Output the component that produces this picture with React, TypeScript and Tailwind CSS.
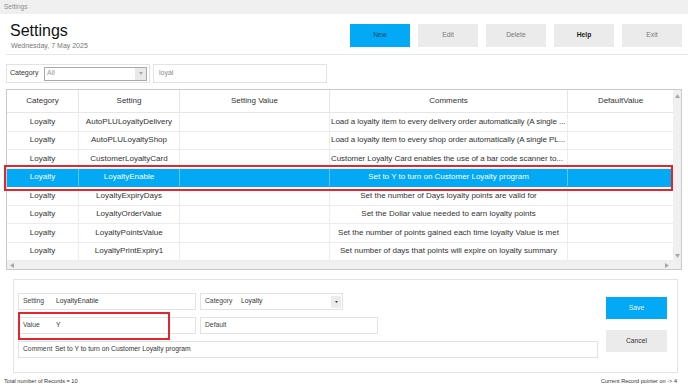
import React from 'react';

const columns = ['Category', 'Setting', 'Setting Value', 'Comments', 'DefaultValue'];

const rows = [
  { setting: 'AutoPLULoyaltyDelivery', comment: 'Load a loyalty item to every delivery order automatically (A single ...', cut: true },
  { setting: 'AutoPLULoyaltyShop', comment: 'Load a loyalty item to every shop order automatically (A single PL...', cut: true },
  { setting: 'CustomerLoyaltyCard', comment: 'Customer Loyalty Card enables the use of a bar code scanner to...', cut: true },
  { setting: 'LoyaltyEnable', comment: 'Set to Y to turn on Customer Loyalty program', selected: true },
  { setting: 'LoyaltyExpiryDays', comment: 'Set the number of Days loyalty points are valid for' },
  { setting: 'LoyaltyOrderValue', comment: 'Set the Dollar value needed to earn loyalty points' },
  { setting: 'LoyaltyPointsValue', comment: 'Set the number of points gained each time loyalty Value is met' },
  { setting: 'LoyaltyPrintExpiry1', comment: 'Set number of days that points will expire on loyalty summary' },
];

function Arrow({ dir }: { dir: 'up' | 'down' | 'left' | 'right' }) {
  const pts = {
    up: '0,4 2.5,0 5,4',
    down: '0,0 5,0 2.5,4',
    left: '4,0 4,5 0,2.5',
    right: '0,0 0,5 4,2.5',
  }[dir];
  return (
    <svg width="5" height="5" viewBox="0 0 5 5" className="block">
      <polygon points={pts} fill="#a8a8a8" />
    </svg>
  );
}

function Field({ label, value, labelW, className }: { label: string; value?: string; labelW: string; className: string }) {
  return (
    <div className={`h-[17px] border border-[#e2e2e2] bg-white flex items-center pl-[4px] ${className}`}>
      <span className={`${labelW} shrink-0 text-[#444]`}>{label}</span>
      <span className="text-[#333]">{value}</span>
    </div>
  );
}

export default function App() {
  return (
    <div className="relative w-[688px] h-[385px] overflow-hidden bg-white font-['Liberation_Sans',Arial,sans-serif] text-[#333]">
      <div className="h-[14px] bg-[#f0f0f0] flex items-center pl-[4px] text-[6.5px] text-[#8c8c8c]">Settings</div>

      <header className="ml-[6px] h-[41px] border-b border-[#e8e8e8] flex justify-between">
        <div className="pl-[4px] pt-[9px]">
          <h1 className="text-[16px] leading-[15px] text-[#111]">Settings</h1>
          <p className="mt-[3px] pl-[1px] text-[7px] leading-[9px] text-[#777]">Wednesday, 7 May 2025</p>
        </div>
        <div className="flex gap-[8px] pt-[10px] pr-[6px] text-[6.75px]">
          <button className="w-[60px] h-[23px] bg-[#03a9f4] text-[#1f4a6b]">New</button>
          <button className="w-[60px] h-[23px] bg-[#ebebeb] text-[#7a7a7a]">Edit</button>
          <button className="w-[60px] h-[23px] bg-[#ebebeb] text-[#7a7a7a]">Delete</button>
          <button className="w-[60px] h-[23px] bg-[#ebebeb] text-[#222] font-bold">Help</button>
          <button className="w-[60px] h-[23px] bg-[#ebebeb] text-[#7a7a7a]">Exit</button>
        </div>
      </header>

      <div className="ml-[6px] mt-[9px] flex gap-[3px] text-[7px]">
        <div className="w-[144px] h-[19px] border border-[#e2e2e2] flex items-center pl-[3px]">
          <span className="w-[34px] text-[#333]">Category</span>
          <div className="w-[103px] h-[14px] border border-[#a9a9a9] flex items-center">
            <span className="flex-1 pl-[2px] text-[#999]">All</span>
            <div className="w-[11px] h-full bg-[#e9e9e9] flex items-center justify-center">
              <svg width="4" height="3" viewBox="0 0 4 3"><polygon points="0,0 4,0 2,3" fill="#aaa" /></svg>
            </div>
          </div>
        </div>
        <div className="w-[174px] h-[19px] border border-[#e2e2e2] flex items-center pl-[5px] text-[#888]">loyal</div>
      </div>

      <div className="mx-[6px] mt-[6px] h-[181px] border border-[#c9c9c9] flex flex-col">
        <div className="flex flex-1 min-h-0">
          <div className="flex-1">
            <div className="grid grid-cols-[72px_101px_150px_238px_105px] h-[23px] border-b border-[#e6e6e6] text-[8px] text-[#333]">
              {columns.map((c) => (
                <div key={c} className="border-r border-[#e6e6e6] last:border-r-0 flex items-center justify-center">{c}</div>
              ))}
            </div>
            {rows.map((r) => {
              const line = r.selected ? 'border-[#5cc6f7]' : 'border-[#ececec]';
              return (
                <div
                  key={r.setting}
                  className={`grid grid-cols-[72px_101px_150px_238px_105px] h-[18.5px] border-b text-[8px] ${r.selected ? 'bg-[#03a9f4] text-white border-[#03a9f4]' : 'text-[#333] border-[#ececec]'}`}
                >
                  <div className={`border-r ${line} flex items-center justify-center`}>Loyalty</div>
                  <div className={`border-r ${line} flex items-center justify-center`}>{r.setting}</div>
                  <div className={`border-r ${line}`} />
                  <div className={`border-r ${line} flex items-center overflow-hidden whitespace-nowrap ${r.cut ? 'pl-[1px] tracking-[-0.06px]' : 'justify-center'}`}>
                    {r.comment}
                  </div>
                  <div />
                </div>
              );
            })}
          </div>
          <div className="w-[8px] bg-[#f0f0f0] flex flex-col justify-between items-center pt-[4px] pb-[2px]">
            <Arrow dir="up" />
            <Arrow dir="down" />
          </div>
        </div>
        <div className="h-[8px] bg-[#f0f0f0] flex items-center justify-between pl-[3px] pr-[11px]">
          <Arrow dir="left" />
          <Arrow dir="right" />
        </div>
      </div>

      <div className="ml-[13px] mt-[9px] w-[665px] h-[94px] border border-[#e3e3e3] flex pl-[4px] pt-[13px] text-[6.75px]">
        <div className="w-[580px] flex flex-col gap-[7px]">
          <div className="flex gap-[4px]">
            <Field label="Setting" value="LoyaltyEnable" labelW="w-[33px]" className="w-[178px]" />
            <div className="w-[143px] h-[17px] border border-[#e2e2e2] flex items-center pl-[4px]">
              <span className="w-[36px] text-[#444]">Category</span>
              <span className="flex-1 text-[#333]">Loyalty</span>
              <div className="w-[10px] h-[12px] mr-[1px] bg-[#ececec] flex items-center justify-center">
                <svg width="3" height="2" viewBox="0 0 3 2"><polygon points="0,0 3,0 1.5,2" fill="#444" /></svg>
              </div>
            </div>
          </div>
          <div className="flex gap-[4px]">
            <Field label="Value" value="Y" labelW="w-[33px]" className="w-[178px]" />
            <Field label="Default" labelW="w-[36px]" className="w-[178px]" />
          </div>
          <Field label="Comment" value="Set to Y to turn on Customer Loyalty program" labelW="w-[32px]" className="w-[580px]" />
        </div>
        <div className="ml-[8px] pt-[4px] flex flex-col gap-[11px]">
          <button className="w-[61px] h-[22px] bg-[#03a9f4] text-[#e6f6fe]">Save</button>
          <button className="w-[61px] h-[22px] bg-[#ebebeb] text-[#333]">Cancel</button>
        </div>
      </div>

      <div className="mt-[5px] h-[7px] flex justify-between pl-[4px] pr-[11px] text-[5.6px] leading-[7px] text-[#333]">
        <span>Total number of Records = 10</span>
        <span>Current Record pointer on -&gt; 4</span>
      </div>

      <div className="absolute left-[4px] top-[165px] w-[669px] h-[26px] border-2 border-[#e4262c]" />
      <div className="absolute left-[18px] top-[312px] w-[152px] h-[28px] border-2 border-[#e4262c]" />
    </div>
  );
}
